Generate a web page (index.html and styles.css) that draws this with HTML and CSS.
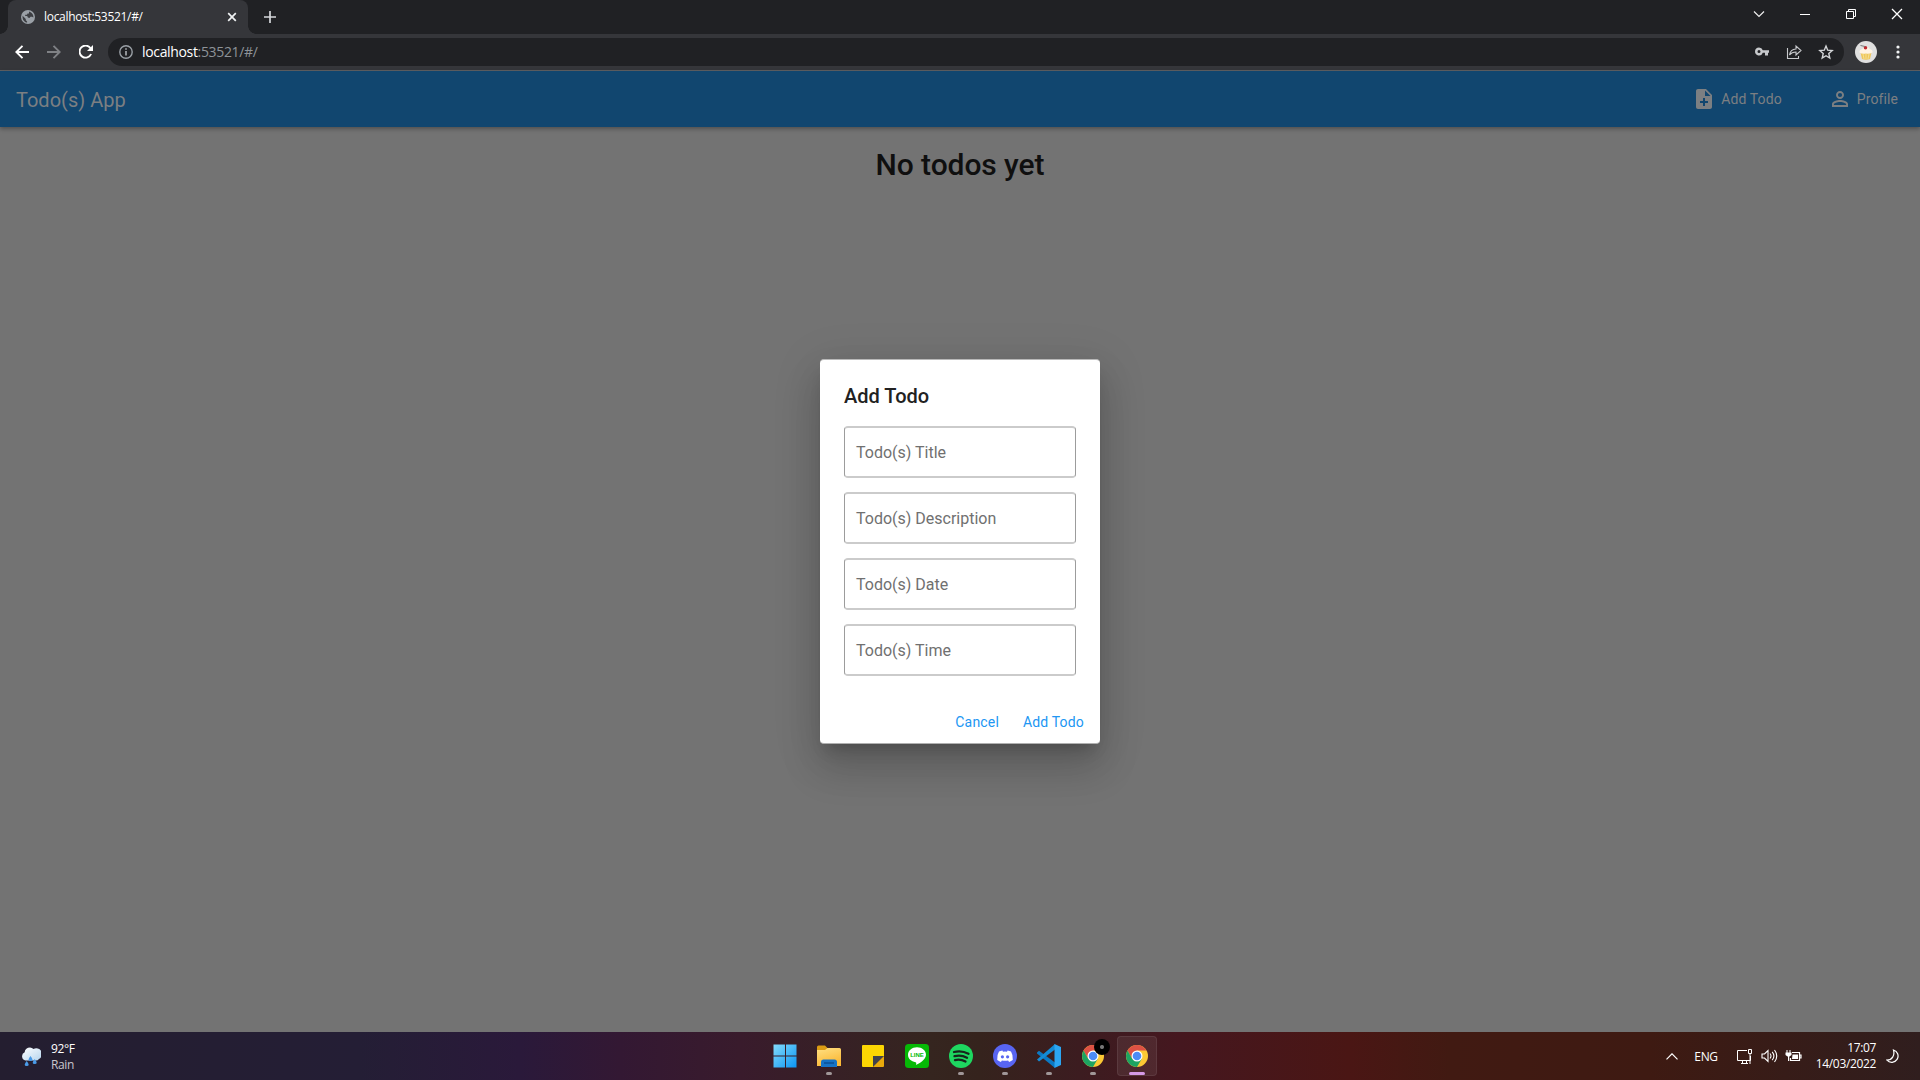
FILE: index.html
```html
<!DOCTYPE html>
<html lang="en">
<head>
<meta charset="utf-8">
<title>Todo(s) App</title>
<link rel="stylesheet" href="styles.css">
</head>
<body>
<div class="desktop">
  <header class="tabstrip">
    <div class="tab">
      <svg class="globe" width="14" height="14" viewBox="0 0 14 14"><circle cx="7" cy="7" r="7" fill="#9aa0a6"/><path d="M1.6 5.7 4.8 9v1.2l1.3 1.2v1.2C3.400 12.200 1.200 9.800 1.600 5.700zM8 1.600 9.600 2.300c2 1 3 3 2.800 5.300L11 6.800H9.500L8.500 8 6.900 7.500 6.200 6.100H4.200V4.800H6L6.500 3.500H8z" fill="#3c3e42"/></svg>
      <span class="tab-title">localhost:53521/#/</span>
      <svg class="tab-close" width="10" height="10" viewBox="0 0 10 10"><path d="M1.200 1.200l7.600 7.600M8.800 1.200L1.200 8.800" stroke="#f1f3f4" stroke-width="1.700"/></svg>
    </div>
    <svg class="new-tab" width="12" height="12" viewBox="0 0 12 12"><path d="M6 0v12M0 6h12" stroke="#d5d7da" stroke-width="1.700"/></svg>
    <div class="window-controls">
      <svg width="46" height="28" viewBox="0 0 46 28"><path d="M18 11.500l5 5 5-5" fill="none" stroke="#eee" stroke-width="1.200"/></svg>
      <svg width="46" height="28" viewBox="0 0 46 28"><path d="M18 14.500h10" stroke="#fff"/></svg>
      <svg width="46" height="28" viewBox="0 0 46 28"><path d="M18.500 11.500h7v7h-7zM20.500 11V9.500h7v7H26" fill="none" stroke="#fff"/></svg>
      <svg width="46" height="28" viewBox="0 0 46 28"><path d="M18 9l10 10M28 9L18 19" stroke="#fff" stroke-width="1.300"/></svg>
    </div>
  </header>
  <nav class="toolbar">
    <svg width="14" height="14" viewBox="0 0 14 14"><path d="M14 7H1.500M7.500 .8L1.300 7l6.200 6.200" fill="none" stroke="#fff" stroke-width="1.900"/></svg>
    <svg width="14" height="14" viewBox="0 0 14 14"><path d="M0 7h12.500M6.500 .8L12.700 7l-6.200 6.200" fill="none" stroke="#7f8185" stroke-width="1.900"/></svg>
    <svg width="14" height="14" viewBox="0 0 14 14"><path d="M12.100 9A6 6 0 1 1 11.500 3.200" fill="none" stroke="#fff" stroke-width="1.900"/><path d="M14 0v6H8z" fill="#fff"/></svg>
    <div class="address">
      <svg class="info" width="14" height="14" viewBox="0 0 14 14"><circle cx="7" cy="7" r="6.200" fill="none" stroke="#9aa0a6" stroke-width="1.400"/><path d="M7 6v4.500M7 3.300v1.500" stroke="#b5b9bd" stroke-width="1.500"/></svg>
      <span class="url"><b>localhost</b>:53521/#/</span>
      <div class="address-icons">
        <svg width="16" height="16" viewBox="0 0 16 16"><path fill-rule="evenodd" d="M5 3.500a4 4 0 1 0 3.800 5.300H11v2.700h3V8.800h1V6.200H8.800A4 4 0 0 0 5 3.500zm0 2.500a1.500 1.500 0 1 1 0 3 1.500 1.500 0 0 1 0-3z" fill="#c7c9cc"/></svg>
        <svg width="16" height="16" viewBox="0 0 16 16"><path d="M1.500 4v10.500h11V12M10 5V2l5 4.500-5 4.500V8C7 8 5 9 3.500 11 4 7.500 6 5.200 10 5z" fill="none" stroke="#c7c9cc" stroke-width="1.100"/></svg>
        <svg width="16" height="16" viewBox="0 0 16 16"><path d="M8 2l1.700 4.200 4.500.4-3.400 3 1 4.400L8 11.700 4.200 14l1-4.400-3.400-3 4.500-.4z" fill="none" stroke="#d5d7da" stroke-width="1.400"/></svg>
      </div>
    </div>
    <svg class="avatar" width="22" height="22" viewBox="0 0 22 22"><circle cx="11" cy="11" r="11" fill="#e0e0e0"/><path d="M5.500 11.500h11L15 18q-4 1.500-8 0z" fill="#efc75c"/><path d="M8 13l1 5M11 13v5M14 13l-1 5" stroke="#f8e4a0" stroke-width=".8"/><path d="M4.500 11.500Q4 8.500 7.500 8 8 5.500 11 5.500T14.500 8Q18 8.500 17.500 11.500 14 13.500 11 12.500 7 13.500 4.500 11.500z" fill="#fff3e4"/><circle cx="10.500" cy="6.800" r="1.800" fill="#bd2b32"/><path d="M10 5.500L5.500 4.500" stroke="#777"/></svg>
    <svg class="kebab" width="4" height="14" viewBox="0 0 4 14"><g fill="#f1f3f4"><circle cx="2" cy="2" r="1.600"/><circle cx="2" cy="7" r="1.600"/><circle cx="2" cy="12" r="1.600"/></g></svg>
  </nav>
  <main class="page">
    <div class="appbar">
      <h1>Todo(s) App</h1>
      <a class="action"><svg width="24" height="24" viewBox="0 0 24 24"><path fill="currentColor" d="M14 2H6c-1.100 0-1.990.9-1.990 2L4 20c0 1.100.89 2 1.990 2H18c1.100 0 2-.9 2-2V8l-6-6zm2 14h-3v3h-2v-3H8v-2h3v-3h2v3h3v2zm-3-7V3.500L18.500 9H13z"/></svg><span>Add Todo</span></a>
      <a class="action profile"><svg width="24" height="24" viewBox="0 0 24 24"><path fill="currentColor" d="M12 5.900a2.100 2.100 0 1 1 0 4.200 2.100 2.100 0 0 1 0-4.200m0 9c2.970 0 6.100 1.460 6.100 2.100v1.100H5.900V17c0-.64 3.130-2.100 6.100-2.100M12 4C9.790 4 8 5.790 8 8s1.790 4 4 4 4-1.790 4-4-1.790-4-4-4zm0 9c-2.670 0-8 1.340-8 4v3h16v-3c0-2.660-5.330-4-8-4z"/></svg><span>Profile</span></a>
    </div>
    <h2 class="empty">No todos yet</h2>
    <div class="overlay">
      <section class="dialog">
        <h3>Add Todo</h3>
        <div class="fields">
          <div class="field">Todo(s) Title</div>
          <div class="field">Todo(s) Description</div>
          <div class="field">Todo(s) Date</div>
          <div class="field">Todo(s) Time</div>
        </div>
        <div class="buttons"><a>Cancel</a><a>Add Todo</a></div>
      </section>
    </div>
  </main>
  <footer class="taskbar">
    <div class="weather">
      <svg width="20" height="22" viewBox="0 0 20 22"><defs><linearGradient id="cloud" x2="1" y2="1"><stop stop-color="#fff"/><stop offset="1" stop-color="#b4d4ee"/></linearGradient></defs><path d="M4.500 14.500a4.400 4.400 0 0 1-.8-8.300A5.200 5.200 0 0 1 12.500 3 5.700 5.700 0 0 1 18 13q-1.500 2-4 1.500z" fill="url(#cloud)"/><path d="M5.700 15q4 5 0 5t0-5zM9.500 10q4 5 0 5t0-5zM13.700 13q4 5 0 5t0-5z" fill="#4a9be8"/></svg>
      <div class="weather-text"><span>92°F</span><span class="dim">Rain</span></div>
    </div>
    <div class="apps">
      <div class="app"><svg width="24" height="24" viewBox="0 0 24 24"><defs><linearGradient id="win" x2="1" y2="1"><stop stop-color="#83dcfc"/><stop offset="1" stop-color="#0b94f4"/></linearGradient></defs><path d="M.5 .5H12v11H.5zM13 .5h10.500v11H13zM.5 12.500H12v11H.5zM13 12.500h10.500v11H13z" fill="url(#win)"/></svg></div>
      <div class="app running"><svg width="24" height="24" viewBox="0 0 24 24"><defs><linearGradient id="folder" y2="1" x2=".4"><stop stop-color="#ffe083"/><stop offset="1" stop-color="#fbb937"/></linearGradient></defs><path d="M0 3q0-1.500 1.500-1.500H8L10.500 4H22v8H0z" fill="#dc9b13"/><path d="M0 6h8l2.500-2H22.500Q24 4 24 5.500V22H0z" fill="url(#folder)"/><path d="M4 23v-5q0-2.500 2.500-2.500h11Q20 15.500 20 18v5z" fill="#1673c6"/><path d="M7 19h10" stroke="#0b4f94" stroke-width="1.500"/></svg></div>
      <div class="app"><svg width="24" height="24" viewBox="0 0 24 24"><path d="M1 2q0-1 1-1h20q1 0 1 1v9.500L12 23H2q-1 0-1-1z" fill="#fcd603"/><path d="M12 12h11L12 23z" fill="#40424c"/><path d="M23 12v10q0 1-1 1H12z" fill="#e9a90c"/></svg></div>
      <div class="app"><svg width="24" height="24" viewBox="0 0 24 24"><rect width="24" height="24" rx="3.500" fill="#06b906"/><path d="M12 3.200c-5 0-9 3.300-9 7.600 0 3.900 3.200 6.900 7.500 7.400 1.100.2.700 1.700.6 2.700C14 19.700 21 15.900 21 10.800c0-4.300-4-7.600-9-7.600z" fill="#fff"/><text class="line-name" x="5.200" y="13.200">LINE</text></svg></div>
      <div class="app running"><svg width="24" height="24" viewBox="0 0 24 24"><circle cx="12" cy="12" r="12" fill="#1ed760"/><path d="M5 8q7.500-2 14.500 1.700M5.500 12.200q6.500-1.700 12.500 1.500M6 16.100q5.500-1.300 10.500 1.400" fill="none" stroke="#17251c" stroke-width="2.300" stroke-linecap="round"/></svg></div>
      <div class="app running"><svg width="24" height="24" viewBox="0 0 24 24"><circle cx="12" cy="12" r="12" fill="#5865f2"/><path d="M9.400 6.500Q7.500 6.800 6 7.500 3.800 11 4.200 16q1.600 1.300 3.700 1.900l1-1.500q3.100.8 6.200 0l1 1.500q2.100-.6 3.700-1.900.4-5-1.800-8.500-1.500-.7-3.400-1l-.6 1.200q-2-.3-4 0z" fill="#fff"/><circle cx="9.400" cy="12.800" r="1.600" fill="#5865f2"/><circle cx="14.600" cy="12.800" r="1.600" fill="#5865f2"/></svg></div>
      <div class="app running"><svg width="24" height="24" viewBox="0 0 24 24"><path d="M0 8.500l2-1.800L18 18.500V24L0 9.500z" fill="#0b79c4"/><path d="M0 15.500L18 0v5.500L2 17.500z" fill="#138bd6"/><path d="M17.500 0L24 3v18l-6.500 3z" fill="#2ba5f2"/></svg></div>
      <div class="app running"><svg width="24" height="24" viewBox="0 0 24 24"><use href="#chrome"/></svg><i class="badge"></i></div>
      <div class="app running active"><svg width="24" height="24" viewBox="0 0 24 24"><g id="chrome"><circle cx="12" cy="12" r="11" fill="#fcc934"/><path d="M2.500 6.500A11 11 0 0 1 21.500 6.500H12L7.200 14.700z" fill="#dd5144"/><path d="M2.500 6.500A11 11 0 0 0 12 23l4.800-8.200H7.200z" fill="#1da462"/><circle cx="12" cy="12" r="5.500" fill="#fff"/><circle cx="12" cy="12" r="4.300" fill="#4c8bf5"/></g></svg></div>
    </div>
    <div class="tray">
      <svg class="chev" width="12" height="7" viewBox="0 0 12 7"><path d="M.5 6.300L6 .8l5.500 5.500" fill="none" stroke="#fff" stroke-width="1.200"/></svg>
      <span class="lang">ENG</span>
      <svg class="net" width="17" height="17" viewBox="0 0 17 17"><path d="M11 2.500H1.500v10H14.500V8M5 15.500h7M6.500 12.500v3M10.500 12.500v3M12.500 1.500h3v4h-3zM14 6v10" fill="none" stroke="#fff"/></svg>
      <svg class="sound" width="17" height="14" viewBox="0 0 17 14"><path d="M1 5h2.500L7 1.500v11L3.500 9H1zM9 4.500q2 2.500 0 5M11.200 2.800q3.400 4.200 0 8.400M13.500 1q4.500 6 0 12" fill="none" stroke="#fff" stroke-width="1.100"/></svg>
      <svg class="battery" width="17" height="13" viewBox="0 0 17 13"><path d="M7 2.500h7.500v8H5.500V8M14.500 5H16v3h-1.500" fill="none" stroke="#fff" stroke-width="1.200"/><path d="M7.500 4.500H13V9H7zM.5 2.500h6V5L4.500 6.500h-2L.5 5zM1.500 0h1v3h-1zM4.500 0h1v3h-1zM3 6h1.200v5H3z" fill="#fff"/></svg>
      <div class="clock"><span>17:07</span><span>14/03/2022</span></div>
      <svg class="moon" width="14" height="15" viewBox="0 0 14 15"><path d="M7.500 1A6.300 6.300 0 1 1 1 11.200C6 11.200 9 6.500 7.500 1z" fill="none" stroke="#fff" stroke-width="1.200"/></svg>
    </div>
  </footer>
</div>
</body>
</html>
```
FILE: styles.css
```css
* { box-sizing: border-box; margin: 0; padding: 0; }
body { width: 1920px; height: 1080px; overflow: hidden; font-family: Roboto, "Liberation Sans", sans-serif; background: #202124; }
svg { display: block; flex: none; }
.desktop { display: flex; flex-direction: column; width: 1920px; height: 1080px; }

.tabstrip { display: flex; align-items: center; height: 34px; padding-left: 8px; background: #202124; font-family: "Open Sans", sans-serif; }
.tab { position: relative; display: flex; align-items: center; width: 240px; height: 34px; padding: 0 11px 0 13px; background: #35363a; border-radius: 8px 8px 0 0; }
.tab::before, .tab::after { content: ""; position: absolute; bottom: 0; width: 8px; height: 8px; }
.tab::before { left: -8px; background: radial-gradient(circle at 0 0, transparent 7.5px, #35363a 8px); }
.tab::after { right: -8px; background: radial-gradient(circle at 100% 0, transparent 7.5px, #35363a 8px); }
.tab-title { margin-left: 9px; padding-bottom: 1px; color: #fff; font-size: 12px; letter-spacing: -0.31px; flex: 1; }
.new-tab { margin-left: 16px; }
.window-controls { display: flex; align-self: flex-start; margin-left: auto; }

.toolbar { display: flex; align-items: center; height: 37px; padding-left: 15px; gap: 18px; background: #35363a; border-bottom: 1px solid #5e5f62; font-family: "Open Sans", sans-serif; }
.address { display: flex; align-items: center; width: 1736px; height: 28px; margin-left: -3px; padding: 0 10px 0 11px; border-radius: 14px; background: #202124; }
.url { margin-left: 9px; padding-bottom: 1px; font-size: 14px; letter-spacing: -0.34px; color: #8e9398; }
.url b { font-weight: 400; color: #fff; }
.address-icons { display: flex; gap: 16px; margin-left: auto; }
.avatar { margin-left: -7px; }
.kebab { margin-left: 1px; }

.page { position: relative; height: 961px; background: #737373; }
.appbar { display: flex; align-items: center; height: 56px; padding: 0 22px 0 16px; background: #11466f; color: #7c7f82; box-shadow: 0 2px 4px rgba(0,0,0,.3); }
.appbar h1 { margin-right: auto; padding-top: 1px; font-size: 20px; font-weight: 400; letter-spacing: 0; }
.action { display: flex; align-items: center; gap: 5px; font-size: 14px; letter-spacing: .1px; }
.profile { margin-left: 46px; }
.empty { padding-top: 18px; text-align: center; font-size: 30px; font-weight: 500; line-height: 40px; letter-spacing: -.08px; color: #0f0f0f; }
.overlay { position: absolute; inset: 0; display: flex; align-items: flex-start; justify-content: center; padding-top: 288px; }
.dialog { display: flex; flex-direction: column; width: 280px; height: 385px; padding: 24px 24px 0; border-top: 1px solid #b9b9b9; border-bottom: 1px solid #b0b0b0; border-radius: 4px; background: #fff; box-shadow: 0 11px 15px -7px rgba(0,0,0,.2), 0 24px 38px 3px rgba(0,0,0,.14), 0 9px 46px 8px rgba(0,0,0,.08); }
.dialog h3 { font-size: 20px; font-weight: 500; line-height: 25px; color: #212121; }
.fields { display: flex; flex-direction: column; gap: 14px; margin-top: 17px; }
.field { display: flex; align-items: center; height: 52px; padding: 0 11px; border: 1px solid #9c9c9c; border-top: 2px solid #cbcbcb; border-bottom: 2px solid #cbcbcb; border-radius: 4px; font-size: 16px; color: #707070; }
.buttons { display: flex; justify-content: flex-end; gap: 24px; margin: 36px -8px 0 0; font-size: 14px; line-height: 20px; font-weight: 400; letter-spacing: .17px; color: #2196f3; }

.taskbar { display: grid; grid-template-columns: 1fr 404px 1fr; align-items: center; height: 48px; padding: 0 11px 0 13px; color: #fff; font-family: "Open Sans", sans-serif; font-size: 12px; background: linear-gradient(90deg, #241e30 0, #241e35 360px, #2a193a 520px, #331833 620px, #391b2c 740px, #35251f 930px, #35231d 980px, #3c1c20 1080px, #45171f 1180px, #4a1614 1350px, #411a12 1450px, #3e1a12 1650px, #301e1e 1920px); }
.weather { display: flex; align-items: center; gap: 8px; padding: 1px 0 0 9px; }
.weather svg { margin-left: -1px; }
.weather-text { display: flex; flex-direction: column; margin-left: 2px; font-size: 12px; line-height: 16px; letter-spacing: -.4px; }
.dim { color: #c9c6cd; }
.apps { display: flex; justify-content: center; gap: 4px; }
.app { position: relative; display: flex; align-items: center; justify-content: center; width: 40px; height: 40px; border-radius: 4px; }
.running::after { content: ""; position: absolute; bottom: 1px; left: 17px; width: 6px; height: 3px; border-radius: 2px; background: #a09798; }
.active { background: rgba(255,255,255,.07); border: 1px solid rgba(255,255,255,.08); }
.active::after { left: 11px; bottom: 0; width: 16px; background: #d59ae6; }
.badge { position: absolute; left: 21px; top: 3px; width: 16px; height: 16px; border-radius: 50%; background: radial-gradient(circle, #777 0 1.500px, #000 2.500px); }
.line-name { font: 900 6px "Liberation Sans", sans-serif; fill: #06b906; }
.tray { display: flex; align-items: center; justify-content: flex-end; padding-right: 9px; }
.lang { margin-left: 16px; font-size: 12px; letter-spacing: -.3px; }
.net { margin-left: 18px; }
.sound { margin-left: 8px; }
.battery { margin-left: 7px; }
.clock { display: flex; flex-direction: column; align-items: flex-end; margin-left: 14px; line-height: 16px; letter-spacing: -.35px; }
.moon { margin-left: 10px; }
```
